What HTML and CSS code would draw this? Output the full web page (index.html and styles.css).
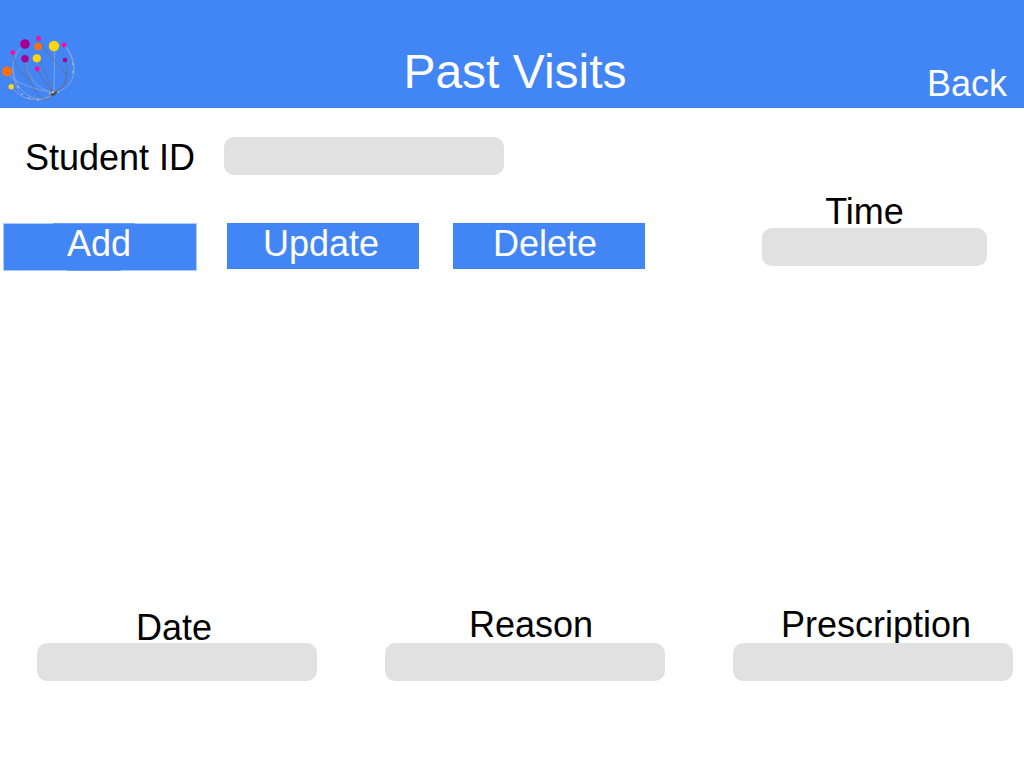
FILE: index.html
```html
<!DOCTYPE html>
<html lang="en">
<head>
<meta charset="utf-8">
<meta name="viewport" content="width=device-width, initial-scale=1">
<title>Past Visits</title>
<link rel="stylesheet" href="styles.css">
</head>
<body>
<header class="topbar">
  <svg class="logo" viewBox="0 0 80 78" aria-hidden="true">
    <g fill="none" stroke="#86a2d6" stroke-width="1">
      <path d="M25 14C17 20 14 27 13 37S16 56 20 62"/>
      <path d="M25 29C26 42 33 58 54 63"/>
      <path d="M54 16C55 30 54 46 54 63"/>
      <path d="M64 15C75 25 79 48 65 58Q60 62 54 63"/>
      <path d="M11 57C22 71 42 74 54 63"/>
      <path d="M7 42C12 53 35 59 54 63"/>
      <path d="M13 37C13 52 24 68 40 69Q50 68 54 63"/>
      <path d="M64 15Q74 26 74 42"/>
    </g>
    <g fill="none" stroke="#667296" stroke-width="1.1" stroke-dasharray="2 .5">
      <path d="M38 8C48 28 62 35 66 46Q68 56 54 63"/>
      <path d="M13 23C15 42 28 46 34 59Q41 71 49 69L54 63"/>
      <path d="M38 28Q46 43 54 63"/>
      <path d="M37 39Q43 51 54 63"/>
      <path d="M65 30C69 42 68 56 54 63"/>
      <path d="M25 29Q25 40 31 50"/>
    </g>
    <g fill="#b9b9bd">
      <circle cx="18" cy="57" r=".9"/><circle cx="22" cy="64" r=".9"/>
      <circle cx="29" cy="68" r=".9"/><circle cx="38" cy="70" r=".9"/>
      <circle cx="73" cy="34" r=".9"/><circle cx="73" cy="42" r=".9"/>
      <circle cx="50" cy="64" r="1.1"/><circle cx="58" cy="62" r="1.1"/>
    </g>
    <path d="M49 65l4-2-2-3 4 2 3-1-2 3-2 2z" fill="#4c4f5c"/>
    <circle cx="53" cy="62" r="1" fill="#ddd"/>
    <g fill="#a8008c"><circle cx="25" cy="14" r="4.8"/><circle cx="25" cy="28.7" r="3.7"/><circle cx="65" cy="30" r="2.3"/></g>
    <g fill="#ff0aa0"><circle cx="38.5" cy="8.5" r="2.4"/><circle cx="64" cy="15" r="2.4"/><circle cx="12.7" cy="22.7" r="2.4"/><circle cx="37.2" cy="39" r="2.4"/></g>
    <g fill="#ff6f10"><circle cx="38.2" cy="16.5" r="3.8"/><circle cx="7" cy="41.5" r="5.1"/></g>
    <g fill="#ffd60a"><circle cx="54" cy="16" r="5.2"/><circle cx="36.8" cy="28.3" r="4.1"/><circle cx="11.2" cy="56.7" r="2.7"/></g>
  </svg>
  <h1 class="title">Past Visits</h1>
  <a class="back" href="#">Back</a>
</header>
<main class="content">
  <div class="student">
    <label for="student-id">Student ID</label>
    <input class="field student-field" id="student-id" type="text">
  </div>
  <div class="controls">
    <div class="actions">
      <button class="action action-add" type="button">Add</button>
      <button class="action action-update" type="button">Update</button>
      <button class="action action-delete" type="button">Delete</button>
    </div>
    <div class="entry entry-time">
      <label for="time">Time</label>
      <input class="field" id="time" type="text">
    </div>
  </div>
  <div class="details">
    <div class="entry entry-date">
      <label for="date">Date</label>
      <input class="field" id="date" type="text">
    </div>
    <div class="entry entry-reason">
      <label for="reason">Reason</label>
      <input class="field" id="reason" type="text">
    </div>
    <div class="entry entry-prescription">
      <label for="prescription">Prescription</label>
      <input class="field" id="prescription" type="text">
    </div>
  </div>
</main>
</body>
</html>
```

FILE: styles.css
```css
* {
  box-sizing: border-box;
}

body {
  margin: 0;
  min-height: 100vh;
  display: flex;
  flex-direction: column;
  background: #fff;
  color: #000;
  font: 36px/42px "Liberation Sans", Arial, sans-serif;
}

.topbar {
  display: grid;
  grid-template-columns: 1fr auto 1fr;
  align-items: end;
  min-height: 108px;
  background: #4285f4;
  color: #fff;
}

.logo {
  width: 80px;
  height: 78px;
}

.title {
  margin: 0;
  padding: 0 0 8px 6px;
  font-size: 48px;
  line-height: 56px;
  font-weight: 400;
}

.back {
  justify-self: end;
  padding: 0 17px 3px 0;
  color: inherit;
  text-decoration: none;
}

.content {
  flex: 1;
  display: flex;
  flex-direction: column;
  padding: 29px 0 87px;
}

.student {
  display: flex;
  gap: 29px;
  padding-left: 25px;
}

.field {
  width: 100%;
  height: 38px;
  padding: 0 10px;
  border: 0;
  border-radius: 10px;
  background: #e1e1e1;
  color: inherit;
  font: inherit;
  font-size: 24px;
}

.student-field {
  width: 280px;
}

.controls {
  display: flex;
  justify-content: space-between;
  align-items: flex-start;
  gap: 30px;
  margin-top: 17px;
  padding: 0 37px 0 3px;
}

.actions {
  display: flex;
  align-items: flex-start;
  padding-top: 27px;
}

.action {
  width: 192px;
  padding: 0 0 4px;
  border: 0;
  background: #4285f4;
  color: #fff;
  font: inherit;
}

.action-add {
  width: 194px;
  padding: 0 2px 6px 0;
  background:
    linear-gradient(#66a0f8, #66a0f8) 50px 0 / 82px 1px no-repeat,
    linear-gradient(#66a0f8, #66a0f8) 64px 100% / 54px 1px no-repeat,
    linear-gradient(#4285f4, #4285f4) center / calc(100% - 2px) calc(100% - 2px) no-repeat,
    #b0cdfb;
}

.action-update {
  margin-left: 30px;
  padding-right: 4px;
}

.action-delete {
  margin-left: 34px;
  padding-right: 8px;
}

.entry {
  display: flex;
  flex-direction: column;
  align-items: center;
  line-height: 36px;
}

.entry-time {
  width: 225px;
  line-height: 32px;
}

.entry-time label {
  padding-right: 20px;
}

.entry-date {
  line-height: 30px;
}

.entry-date label {
  padding-right: 6px;
}

.entry-reason label {
  padding-left: 12px;
}

.entry-prescription label {
  padding-left: 6px;
}

.details {
  display: grid;
  grid-template-columns: repeat(3, 1fr);
  align-items: end;
  gap: 68px;
  margin-top: auto;
  padding: 0 11px 0 37px;
}
```
